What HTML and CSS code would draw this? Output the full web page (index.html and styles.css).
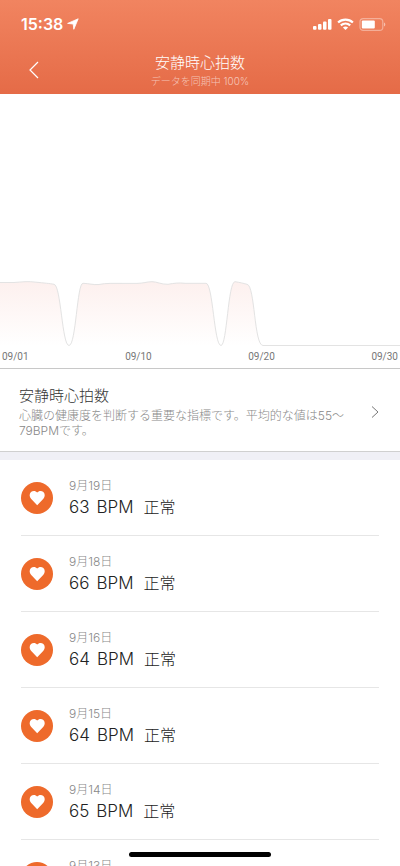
FILE: index.html
```html
<!DOCTYPE html>
<html lang="ja">
<head>
<meta charset="utf-8">
<meta name="viewport" content="width=device-width, initial-scale=1">
<title>安静時心拍数</title>
<link rel="stylesheet" href="styles.css">
</head>
<body>
<svg class="symbols" aria-hidden="true">
  <symbol id="heart" viewBox="0 0 32 32">
    <circle cx="16" cy="16" r="16" fill="#ee6a2b"/>
    <path fill="#fff" d="M16.2 23.2 10 16.8C8.200 14.900 8.200 11.800 10 10.100C11.800 8.400 14.700 8.600 16.200 10.600C17.700 8.600 20.600 8.400 22.400 10.100C24.200 11.800 24.200 14.900 22.400 16.800Z"/>
  </symbol>
</svg>
<div class="app">
  <header class="header">
    <div class="status">
      <span class="clock">15:38</span>
      <svg class="location" width="12" height="12" viewBox="0 0 12 12" aria-hidden="true"><path fill="#fff" stroke="#fff" stroke-width=".8" stroke-linejoin="round" d="M11.200 .8 6.800 11.300 6.200 6 .6 5.400Z"/></svg>
      <div class="status-icons" aria-hidden="true">
        <svg width="19" height="12" viewBox="0 0 19 12" fill="#fff"><rect x="0" y="8" width="3.500" height="3.800" rx="1"/><rect x="5" y="6" width="3.500" height="5.800" rx="1"/><rect x="10" y="3.500" width="3.500" height="8.300" rx="1"/><rect x="15" y="1" width="3.500" height="10.800" rx="1"/></svg>
        <svg width="17" height="12" viewBox="0 0 17 12" fill="none" stroke="#fff" stroke-width="2.200"><path d="M1.100 4.500C5.100 .7 11.900 .7 15.900 4.500"/><path d="M3.800 7.400C6.500 5 10.500 5 13.200 7.400"/><path fill="#fff" stroke="none" d="M8.500 12 5.900 9.400C7.300 8.200 9.700 8.200 11.100 9.400Z"/></svg>
        <svg width="27" height="13" viewBox="0 0 27 13"><rect x="1" y=".6" width="22.800" height="11.800" rx="3.200" fill="none" stroke="#fff" stroke-opacity=".38" stroke-width="1.200"/><rect x="2.800" y="2.500" width="13" height="8" rx="1" fill="#fff"/><path fill="#fff" fill-opacity=".5" d="M25 4.500C26.800 5.200 26.800 7.800 25 8.500Z"/></svg>
      </div>
    </div>
    <div class="navbar">
      <button class="back" aria-label="戻る"><svg width="10" height="18" viewBox="0 0 10 18" fill="none" stroke="#fff" stroke-width="1.200"><path d="M9 1 1 9 9 17"/></svg></button>
      <div class="heading">
        <h1>安静時心拍数</h1>
        <p>データを同期中 100%</p>
      </div>
    </div>
  </header>
  <main class="content">
    <section class="chart">
      <svg class="plot" viewBox="0 0 400 252" preserveAspectRatio="none" role="img" aria-label="9月の安静時心拍数">
        <defs><linearGradient id="area" gradientUnits="userSpaceOnUse" x1="0" y1="187" x2="0" y2="252"><stop offset="0" stop-color="#fdf0ee"/><stop offset="1" stop-color="#ffffff"/></linearGradient></defs>
        <path fill="url(#area)" stroke="#e3e3e3" vector-effect="non-scaling-stroke" d="M-2 188.500H14C22 188 28 187 36 188.200C44 189 50 189.500 54 190.300C61 191 62 251.500 69 251.500C76 251.500 77 189 83 189.300C89 189.500 93 191 99 190.500C106 189 114 189.400 122 189.400H137C143 189.400 147 187.700 152 187.700C157 187.700 161 190.500 168 190.300C174 189.200 179 188.600 185 189.300H206C213 189.300 214 251.500 221 251.500C227 251.500 228 187.700 235 187.700C240 188.500 243 189.200 247 190.300C255 191 254 251.500 263 251.500H402V254H-2Z"/>
      </svg>
      <div class="axis"><span>09/01</span><span>09/10</span><span>09/20</span><span>09/30</span></div>
    </section>
    <a class="about" href="#about">
      <div class="about-text">
        <h2>安静時心拍数</h2>
        <p>心臓の健康度を判断する重要な指標です。平均的な値は55〜79BPMです。</p>
      </div>
      <svg width="8" height="12" viewBox="0 0 8 12" fill="none" stroke="#777" aria-hidden="true"><path d="M1 .5 7 6 1 11.500"/></svg>
    </a>
    <ul class="records">
      <li><svg class="heart" aria-hidden="true"><use href="#heart"/></svg><div><time>9月19日</time><p class="reading"><span>63</span><span>BPM</span><span class="state">正常</span></p></div></li>
      <li><svg class="heart" aria-hidden="true"><use href="#heart"/></svg><div><time>9月18日</time><p class="reading"><span>66</span><span>BPM</span><span class="state">正常</span></p></div></li>
      <li><svg class="heart" aria-hidden="true"><use href="#heart"/></svg><div><time>9月16日</time><p class="reading"><span>64</span><span>BPM</span><span class="state">正常</span></p></div></li>
      <li><svg class="heart" aria-hidden="true"><use href="#heart"/></svg><div><time>9月15日</time><p class="reading"><span>64</span><span>BPM</span><span class="state">正常</span></p></div></li>
      <li><svg class="heart" aria-hidden="true"><use href="#heart"/></svg><div><time>9月14日</time><p class="reading"><span>65</span><span>BPM</span><span class="state">正常</span></p></div></li>
      <li><svg class="heart" aria-hidden="true"><use href="#heart"/></svg><div><time>9月13日</time><p class="reading"></p></div></li>
    </ul>
  </main>
  <div class="home-indicator"></div>
</div>
</body>
</html>
```
FILE: styles.css
```css
* {
  box-sizing: border-box;
  margin: 0;
  padding: 0;
}

body {
  background: #fff;
  color: #222;
  font-family: Inter, "Noto Sans CJK JP", sans-serif;
  font-weight: 300;
}

svg {
  display: block;
  flex: none;
}

.symbols {
  position: absolute;
  width: 0;
  height: 0;
}

.app {
  position: relative;
  display: flex;
  flex-direction: column;
  height: 100vh;
  overflow: hidden;
}

.header {
  flex: none;
  padding-bottom: 5px;
  background: linear-gradient(#f18460, #e56b47);
  color: #fff;
}

.status {
  display: flex;
  align-items: center;
  gap: 4px;
  height: 48px;
  padding: 0 14px 0 21px;
}

.clock {
  font-size: 16px;
  font-weight: 600;
}

.status-icons {
  display: flex;
  align-items: center;
  gap: 5px;
  margin-left: auto;
}

.navbar {
  display: grid;
  grid-template-columns: 48px 1fr 48px;
  height: 41px;
}

.back {
  display: flex;
  align-items: center;
  justify-content: flex-end;
  height: 44px;
  padding-right: 9px;
  border: 0;
  background: none;
}

.heading {
  padding-top: 4px;
  text-align: center;
}

h1 {
  font-size: 15px;
  font-weight: 300;
  line-height: 22px;
}

.heading p {
  color: rgb(255 255 255 / 60%);
  font-size: 10px;
  line-height: 15px;
}

.content {
  flex: 1;
  min-height: 0;
}

.chart {
  border-bottom: 1px solid #c8c8c8;
}

.plot {
  width: 100%;
  height: 252px;
}

.axis {
  display: flex;
  justify-content: space-between;
  padding: 4px 2px;
  color: #777;
  font-family: Roboto, sans-serif;
  font-size: 10px;
  font-weight: 400;
  line-height: 14px;
}

.about {
  display: flex;
  align-items: center;
  justify-content: space-between;
  padding: 16px 21px 13px 19px;
  border-bottom: 1px solid #d0d0d0;
  color: inherit;
  text-decoration: none;
}

.about-text {
  max-width: 332px;
}

h2 {
  color: #333;
  font-size: 15px;
  font-weight: 300;
  line-height: 22px;
}

.about p {
  padding-top: 1px;
  color: #888;
  font-size: 12px;
  line-height: 15px;
}

.records {
  border-top: 8px solid #f0f0f6;
  list-style: none;
}

.records li {
  display: flex;
  align-items: center;
  gap: 16px;
  height: 76px;
  margin: 0 21px;
  border-bottom: 1px solid #e6e6e6;
}

.heart {
  width: 32px;
  height: 32px;
}

time {
  display: block;
  color: #888;
  font-size: 12px;
  line-height: 18px;
}

.reading {
  display: flex;
  gap: 7px;
  height: 24px;
  font-size: 17px;
  line-height: 24px;
}

.state {
  margin-left: 3px;
  font-size: 16px;
}

.home-indicator {
  position: absolute;
  bottom: 9px;
  left: 50%;
  width: 142px;
  height: 5px;
  border-radius: 3px;
  background: #000;
  transform: translateX(-50%);
}
```
